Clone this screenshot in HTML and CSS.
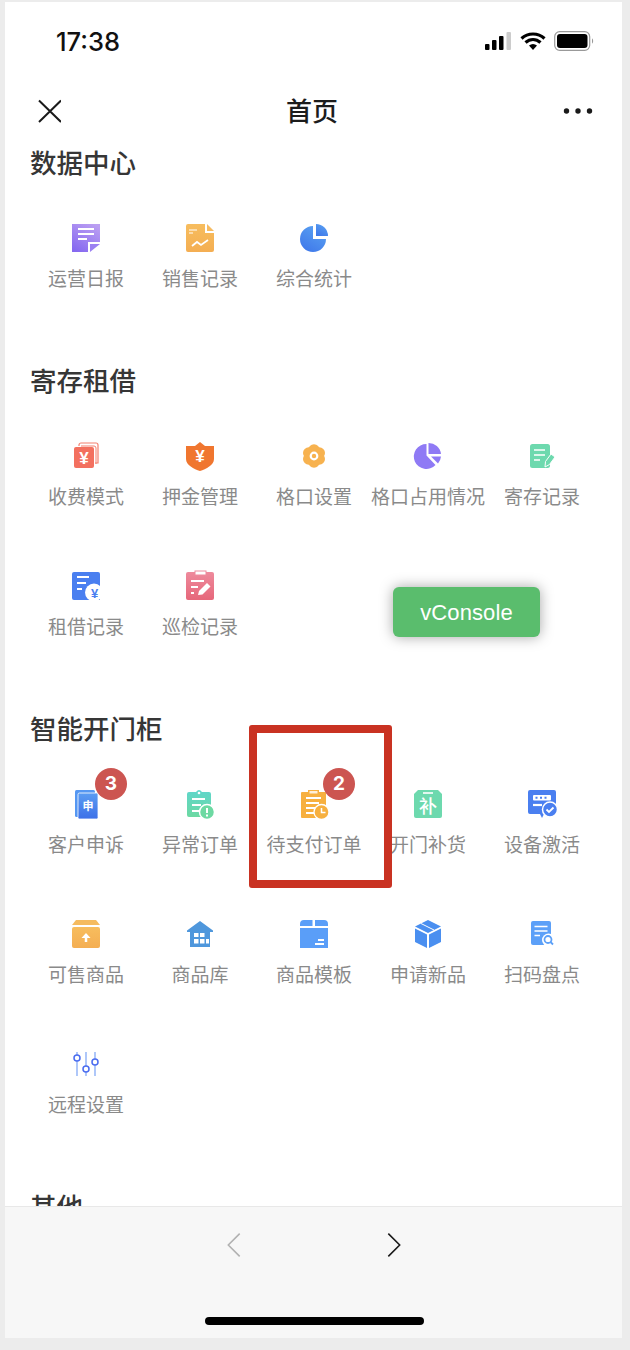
FILE: index.html
```html
<!DOCTYPE html>
<html lang="zh">
<head>
<meta charset="utf-8">
<title>首页</title>
<link rel="stylesheet" href="styles.css">
</head>
<body>
<svg class="defs" aria-hidden="true"><defs>
<linearGradient id="gPurple" x1="0.8" y1="0" x2="0.2" y2="1"><stop offset="0" stop-color="#bb9ff2"/><stop offset="1" stop-color="#8669f0"/></linearGradient>
<linearGradient id="gOrange" x1="0" y1="0" x2="0" y2="1"><stop offset="0" stop-color="#f7bd5e"/><stop offset="1" stop-color="#f4ae52"/></linearGradient>
<linearGradient id="gBlue" x1="0.8" y1="0" x2="0.2" y2="1"><stop offset="0" stop-color="#5aa2f2"/><stop offset="1" stop-color="#3f78ea"/></linearGradient>
<linearGradient id="gPink" x1="0" y1="0" x2="0" y2="1"><stop offset="0" stop-color="#ee8a9c"/><stop offset="1" stop-color="#e6677a"/></linearGradient>
<linearGradient id="gTeal" x1="0" y1="0" x2="0" y2="1"><stop offset="0" stop-color="#5fd6cc"/><stop offset="1" stop-color="#6dd9a2"/></linearGradient>
<linearGradient id="gDoc" x1="0" y1="0" x2="0" y2="1"><stop offset="0" stop-color="#5b9cf2"/><stop offset="1" stop-color="#3c70e8"/></linearGradient>
</defs></svg>
<div class="phone">
  <header class="status">
    <span class="time">17:38</span>
    <span class="status-icons">
      <svg class="sig" viewBox="0 0 28 18"><rect x="0" y="12" width="4.500" height="6" rx="1" fill="#000"/><rect x="7" y="8" width="4.500" height="10" rx="1" fill="#000"/><rect x="14" y="4" width="4.500" height="14" rx="1" fill="#000"/><rect x="21.500" y="0" width="4.500" height="18" rx="1" fill="#ccc"/></svg>
      <svg class="wifi" viewBox="0 0 26 18"><path d="M1.500 6.500C8 .5 18 .5 24.500 6.500M5.500 10.500C10 6.500 16 6.500 20.500 10.500" fill="none" stroke="#000" stroke-width="3.200"/><path d="M9 13.500C11.500 11.500 14.500 11.500 17 13.500L13 18Z" fill="#000"/></svg>
      <svg class="batt" viewBox="0 0 40 20"><rect x="0.700" y="0.700" width="35" height="18.600" rx="5" fill="none" stroke="#999" stroke-width="1.200"/><rect x="3" y="3" width="30.500" height="14" rx="3" fill="#000"/><path d="M38 7.500C39.500 8 39.500 12 38 12.500Z" fill="#999"/></svg>
    </span>
  </header>
  <nav class="nav">
    <svg class="nav-close" viewBox="0 0 24 24"><path d="M2 1.500L24 23M24 1.500L2 23" fill="none" stroke="#1a1a1a" stroke-width="2"/></svg>
    <span class="nav-title">首页</span>
    <svg class="nav-more" viewBox="0 0 30 6"><circle cx="3.500" cy="3" r="2.700"/><circle cx="15" cy="3" r="2.700"/><circle cx="26.500" cy="3" r="2.700"/></svg>
  </nav>
  <main class="content">
    <section class="section">
      <h2 class="section-title">数据中心</h2>
      <div class="grid">
        <div class="item"><svg class="ico" viewBox="0 0 32 32"><path d="M2 2H30V20H18V30H2Z" fill="url(#gPurple)"/><path d="M20 22H30L20 30Z" fill="#9b80f2"/><path d="M8 7H24M8 12H24M8 17H17" stroke="#fff" stroke-width="2" fill="none"/></svg><span class="label">运营日报</span></div>
        <div class="item"><svg class="ico" viewBox="0 0 32 32"><path d="M4 2H21V11H30V28A2 2 0 0 1 28 30H4A2 2 0 0 1 2 28V4A2 2 0 0 1 4 2Z" fill="url(#gOrange)"/><path d="M23 2L30 9H23Z" fill="#f6bb62"/><path d="M5 8H13M5 11H9" stroke="#fff" stroke-width="1.200" fill="none"/><path d="M8 24L13 20L17 23L24 18" stroke="#fff" stroke-width="1.800" fill="none"/></svg><span class="label">销售记录</span></div>
        <div class="item"><svg class="ico" viewBox="0 0 32 32"><path d="M15 17V4A13 13 0 1 0 28 17Z" fill="url(#gBlue)"/><path d="M18 2A12 12 0 0 1 30 14H18Z" fill="url(#gBlue)"/></svg><span class="label">综合统计</span></div>
      </div>
    </section>
    <section class="section">
      <h2 class="section-title">寄存租借</h2>
      <div class="grid">
        <div class="item"><svg class="ico" viewBox="0 0 32 32"><path d="M9 6V5A2 2 0 0 1 11 3H26A2 2 0 0 1 28 5V23H25" fill="none" stroke="#f4806f" stroke-width="1.200"/><path d="M11 6H24A2 2 0 0 1 26 8V24" fill="none" stroke="#f4806f" stroke-width="1"/><rect x="4" y="7" width="20" height="21" rx="2" fill="#f3705f"/><text class="ico-yen" x="14" y="23.500">¥</text></svg><span class="label">收费模式</span></div>
        <div class="item"><svg class="ico" viewBox="0 0 32 32"><path d="M16 2L21 6H30V19C30 25 22 29 16 31C10 29 2 25 2 19V6H11Z" fill="#f0762f"/><text class="ico-yen" x="16" y="21.500">¥</text></svg><span class="label">押金管理</span></div>
        <div class="item"><svg class="ico" viewBox="0 0 32 32"><g fill="#f7b24f"><circle cx="16" cy="16" r="8.500"/><circle cx="16" cy="10" r="5.800"/><circle cx="16" cy="22" r="5.800"/><circle cx="10.800" cy="13" r="5.800"/><circle cx="21.200" cy="13" r="5.800"/><circle cx="10.800" cy="19" r="5.800"/><circle cx="21.200" cy="19" r="5.800"/></g><circle cx="16" cy="16" r="3.300" fill="none" stroke="#fff" stroke-width="2.200"/></svg><span class="label">格口设置</span></div>
        <div class="item"><svg class="ico" viewBox="0 0 32 32"><path d="M14.500 15.500V4A12.500 12.500 0 1 0 23.500 25Z" fill="#8f7af5"/><path d="M16.500 3A12.500 12.500 0 0 1 29 14H16.500Z" fill="#8f7af5"/><path d="M19 16.500H29A12.500 12.500 0 0 1 26 23.500Z" fill="#8f7af5"/></svg><span class="label">格口占用情况</span></div>
        <div class="item"><svg class="ico" viewBox="0 0 32 32"><rect x="4" y="4" width="20" height="24" rx="2.500" fill="#6dd9ae"/><path d="M8 10H19M8 15H19M8 20H14" stroke="#fff" stroke-width="1.400" fill="none"/><path d="M19 27L19.500 21.500L25 14L29 17L23.500 24.500Z" fill="#6dd9ae" stroke="#fff" stroke-width="1"/></svg><span class="label">寄存记录</span></div>
        <div class="item"><svg class="ico" viewBox="0 0 32 32"><path d="M4 2H28A2 2 0 0 1 30 4V30H4A2 2 0 0 1 2 28V4A2 2 0 0 1 4 2Z" fill="#4a7ff0"/><path d="M7 7H19M7 13H16M7 19H12" stroke="#fff" stroke-width="2.200" fill="none"/><circle cx="24" cy="22.500" r="9" fill="#fff"/><text class="ico-yen ico-yen-blue" x="24.500" y="28">¥</text></svg><span class="label">租借记录</span></div>
        <div class="item"><svg class="ico" viewBox="0 0 32 32"><rect x="2" y="2" width="28" height="28" rx="2" fill="url(#gPink)"/><rect x="11" y="1" width="11" height="4" fill="#fff" stroke="#ee8a9c"/><path d="M7 11H20M7 17H14M7 23H10" stroke="#fff" stroke-width="2.200" fill="none"/><path d="M14 25L15 21L23 13L26.500 16.500L18.500 24.500Z" fill="#fff"/></svg><span class="label">巡检记录</span></div>
      </div>
    </section>
    <section class="section">
      <h2 class="section-title">智能开门柜</h2>
      <div class="grid">
        <div class="item">
          <span class="ico-wrap"><svg class="ico" viewBox="0 0 32 32"><rect x="5" y="2" width="20" height="27" rx="1.500" fill="#5597f2"/><rect x="8" y="5" width="20" height="26" rx="1.500" fill="url(#gDoc)" stroke="#fff" stroke-width="0.800"/><text class="ico-char" x="18" y="22">申</text></svg><b class="badge">3</b></span>
          <span class="label">客户申诉</span>
        </div>
        <div class="item"><svg class="ico" viewBox="0 0 32 32"><path d="M5 4H12Q15 0 18 4H25A2 2 0 0 1 27 6V29H5A2 2 0 0 1 3 27V6A2 2 0 0 1 5 4Z" fill="url(#gTeal)"/><circle cx="15" cy="5" r="1.300" fill="#fff"/><path d="M8 11H21M8 17H17M8 23H16" stroke="#fff" stroke-width="1.800" fill="none"/><circle cx="23" cy="24" r="7.500" fill="#6dd9a2" stroke="#fff" stroke-width="1.500"/><path d="M23 20V25M23 26.500V28.500" stroke="#fff" stroke-width="2" fill="none"/></svg><span class="label">异常订单</span></div>
        <div class="item">
          <span class="ico-wrap"><svg class="ico" viewBox="0 0 32 32"><path d="M4 4H10V2H21V4H27A1 1 0 0 1 28 5V23H20V30H4A1 1 0 0 1 3 29V5A1 1 0 0 1 4 4Z" fill="#f7b03f"/><rect x="11.500" y="3" width="8" height="2.500" fill="#fff" opacity="0.800"/><path d="M8 10H23M8 15H21M8 20H18M8 25H16" stroke="#fff" stroke-width="1.800" fill="none"/><circle cx="23.500" cy="24" r="7.500" fill="#f7b03f" stroke="#fff" stroke-width="1.300"/><path d="M23.500 20V24.500H27.500" stroke="#fff" stroke-width="1.500" fill="none"/></svg><b class="badge">2</b></span>
          <span class="label">待支付订单</span>
        </div>
        <div class="item"><svg class="ico" viewBox="0 0 32 32"><path d="M6 2H26L30 6V28A2 2 0 0 1 28 30H4A2 2 0 0 1 2 28V6Z" fill="#6dd9ae"/><path d="M11 5H21" stroke="#fff" stroke-width="1.600"/><text class="ico-char ico-char-lg" x="16" y="25">补</text></svg><span class="label">开门补货</span></div>
        <div class="item"><svg class="ico" viewBox="0 0 32 32"><path d="M4 2H28A2 2 0 0 1 30 4V24A2 2 0 0 1 28 26H18L16 30L14 26H4A2 2 0 0 1 2 24V4A2 2 0 0 1 4 2Z" fill="#4a7ff0"/><rect x="7" y="7" width="18" height="5.500" rx="1" fill="#fff"/><path d="M9.500 9.800H11.500M14 9.800H16M18.500 9.800H20.500" stroke="#4a7ff0" stroke-width="2" fill="none"/><path d="M7 17H16" stroke="#fff" stroke-width="2.200"/><circle cx="24" cy="21.500" r="7.500" fill="#4a7ff0" stroke="#fff" stroke-width="1.500"/><path d="M20.500 21.500L23 24L27.500 19.500" stroke="#fff" stroke-width="1.800" fill="none"/></svg><span class="label">设备激活</span></div>
        <div class="item"><svg class="ico" viewBox="0 0 32 32"><path d="M6 2H26L30 7H2Z" fill="#f5bb5f"/><rect x="2" y="9" width="28" height="21" rx="2" fill="url(#gOrange)"/><path d="M16 24V19" stroke="#fff" stroke-width="2.500" fill="none"/><path d="M11.500 20L16 15L20.500 20Z" fill="#fff"/></svg><span class="label">可售商品</span></div>
        <div class="item"><svg class="ico" viewBox="0 0 32 32"><path d="M16 3L29 12.500V14H26V29H6V14H3V12.500Z" fill="#4f97dc"/><path d="M10 15H14.500V19H10ZM16 15H20.500V19H16ZM10 21H14.500V25.500H10ZM16 21H20.500V25.500H16ZM22 21H25V25.500H22Z" fill="#fff"/></svg><span class="label">商品库</span></div>
        <div class="item"><svg class="ico" viewBox="0 0 32 32"><path d="M6 2H14.500V8H2V6A4 4 0 0 1 6 2ZM17 2H26A4 4 0 0 1 30 6V8H17ZM2 10H30V30H2Z" fill="#5a9ef8"/><path d="M20 22H26M17 26H26" stroke="#fff" stroke-width="2" fill="none"/></svg><span class="label">商品模板</span></div>
        <div class="item"><svg class="ico" viewBox="0 0 32 32"><path d="M16 2L29 8.500L16 15L3 8.500Z" fill="#4a8ff0"/><path d="M3 10.500L15 16.500V30L3 24Z" fill="#4a8ff0"/><path d="M29 10.500L17 16.500V30L29 24Z" fill="#4a8ff0"/><path d="M9 5.500L22 12" stroke="#fff" stroke-width="1" fill="none"/></svg><span class="label">申请新品</span></div>
        <div class="item"><svg class="ico" viewBox="0 0 32 32"><rect x="5" y="3" width="20" height="24" rx="2" fill="#5ca0f8"/><path d="M8.500 8.500H21.500M8.500 13H21.500M8.500 17.500H14" stroke="#fff" stroke-width="1.500" fill="none"/><circle cx="22.500" cy="22" r="6.500" fill="#fff"/><circle cx="22" cy="21.500" r="3.500" fill="none" stroke="#5ca0f8" stroke-width="1.800"/><path d="M24.500 24L27 26.500" stroke="#5ca0f8" stroke-width="1.800"/></svg><span class="label">扫码盘点</span></div>
        <div class="item"><svg class="ico" viewBox="0 0 32 32"><path d="M7 4V28M16 4V28M25 4V28" stroke="#7aa2f5" stroke-width="1.200" fill="none"/><circle cx="7" cy="10" r="3" fill="#fff" stroke="#4a6cf0" stroke-width="1.500"/><circle cx="16" cy="21" r="3" fill="#fff" stroke="#4a6cf0" stroke-width="1.500"/><circle cx="25" cy="14" r="3" fill="#fff" stroke="#4a6cf0" stroke-width="1.500"/></svg><span class="label">远程设置</span></div>
      </div>
    </section>
    <section class="section">
      <h2 class="section-title">其他</h2>
    </section>
  </main>
  <footer class="toolbar">
    <div class="toolbar-arrows">
      <svg class="arrow" viewBox="0 0 16 28"><path d="M14.500 1L1.500 14L14.500 27" fill="none" stroke="#b2b2b2" stroke-width="1.800"/></svg>
      <svg class="arrow" viewBox="0 0 16 28"><path d="M1.500 1L14.500 14L1.500 27" fill="none" stroke="#1a1a1a" stroke-width="1.800"/></svg>
    </div>
    <div class="home-bar"></div>
  </footer>
  <div class="vconsole">vConsole</div>
  <div class="callout"></div>
</div>
</body>
</html>
```
FILE: styles.css
```css
* { box-sizing: border-box; }
html, body { margin: 0; padding: 0; }
body {
  width: 630px;
  height: 1350px;
  overflow: hidden;
  background: #ececec;
  font-family: "Noto Sans CJK SC", "Noto Sans", sans-serif;
}
.defs { display: block; width: 0; height: 0; }
.phone {
  position: relative;
  width: 617px;
  height: 1336px;
  margin: 2px 0 0 5px;
  background: #fff;
  display: flex;
  flex-direction: column;
  overflow: visible;
}
.status {
  flex: none;
  height: 78px;
  padding: 0 28px 0 51px;
  display: flex;
  align-items: center;
  justify-content: space-between;
}
.time {
  margin-top: 1px;
  font-family: Inter, Roboto, sans-serif;
  font-size: 25.500px;
  font-weight: 500;
  color: #111;
}
.status-icons { display: flex; align-items: center; }
.sig { width: 28px; height: 18px; margin-right: 7px; }
.wifi { width: 26px; height: 18px; margin-right: 8px; }
.batt { width: 40px; height: 20px; }
.nav {
  flex: none;
  height: 62px;
  padding: 0 29px 0 32px;
  display: flex;
  align-items: center;
  justify-content: space-between;
}
.nav-close { width: 24px; height: 24px; }
.nav-title { margin-top: -2px; font-size: 26px; font-weight: 500; color: #1c1c1c; line-height: 36px; }
.nav-more { width: 30px; height: 6px; fill: #1a1a1a; }
.content {
  flex: 1 1 0;
  min-height: 0;
  overflow: hidden;
}
.section { padding-bottom: 28px; }
.section-title {
  margin: 0 0 18px;
  padding-left: 25px;
  height: 42px;
  line-height: 40px;
  font-size: 26.500px;
  font-weight: 500;
  color: #363636;
  white-space: nowrap;
}
.grid {
  display: grid;
  grid-template-columns: repeat(5, 114px);
  grid-auto-rows: 130px;
  margin-left: 24px;
}
.item {
  display: flex;
  flex-direction: column;
  align-items: center;
  padding-top: 20px;
}
.ico { display: block; width: 32px; height: 32px; flex: none; }
.ico-wrap { position: relative; display: block; width: 32px; height: 32px; }
.label {
  margin-top: 12px;
  font-size: 19px;
  line-height: 24px;
  color: #8a8a8a;
  white-space: nowrap;
}
.badge {
  position: absolute;
  left: 25px;
  top: -20px;
  width: 32px;
  height: 32px;
  border-radius: 50%;
  background: #cc5551;
  color: #fff;
  font-family: Inter, Roboto, sans-serif;
  font-size: 19px;
  font-weight: 700;
  line-height: 32px;
  text-align: center;
}
.ico-yen {
  font-family: "Liberation Sans", sans-serif;
  font-size: 17px;
  font-weight: 700;
  fill: #fff;
  text-anchor: middle;
}
.ico-yen-blue { font-size: 13px; fill: #4a7ff0; }
.ico-char {
  font-family: "Noto Sans CJK SC", sans-serif;
  font-size: 11px;
  font-weight: 700;
  fill: #fff;
  text-anchor: middle;
}
.ico-char-lg { font-size: 18px; font-weight: 500; }
.toolbar {
  flex: none;
  height: 132px;
  background: #f7f7f7;
  border-top: 1px solid #e8e8e8;
  display: flex;
  flex-direction: column;
  align-items: center;
}
.toolbar-arrows {
  display: flex;
  gap: 146px;
  margin-top: 25px;
}
.arrow { display: block; width: 14px; height: 26px; }
.home-bar {
  width: 219px;
  height: 8px;
  margin: 59px 0 0 1px;
  border-radius: 4px;
  background: #000;
}
.vconsole {
  position: absolute;
  left: 388px;
  top: 585px;
  width: 147px;
  height: 50px;
  border-radius: 6px;
  background: #5abd6d;
  color: #fff;
  font-family: "Liberation Sans", sans-serif;
  font-size: 22px;
  letter-spacing: 0.100px;
  line-height: 52px;
  text-align: center;
  box-shadow: 0 0 14px rgba(0, 0, 0, 0.35);
}
.callout {
  position: absolute;
  left: 244px;
  top: 723px;
  width: 143px;
  height: 163px;
  border: 8px solid #c93222;
  border-radius: 3px;
}
```
